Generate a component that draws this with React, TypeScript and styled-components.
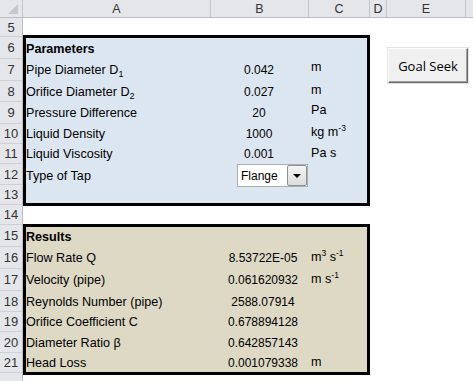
import React from "react";
import styled, { createGlobalStyle } from "styled-components";

const Global = createGlobalStyle`
  html, body {
    margin: 0;
    padding: 0;
    background: #fff;
    overflow: hidden;
    height: 381px;
  }
  body {
    font-family: "Liberation Sans", Arial, sans-serif;
    color: #000;
  }
`;

const Sheet = styled.div`
  display: flex;
  flex-direction: column;
  width: 473px;
  height: 381px;
  overflow: hidden;
`;

const ColHeaderRow = styled.div`
  display: flex;
  height: 18px;
  background: #e4e6ea;
  border-bottom: 1px solid #b9bec5;
  box-sizing: border-box;
  flex-shrink: 0;
`;

const Corner = styled.div`
  width: 23px;
  border-right: 1px solid #c3c7cd;
  box-sizing: border-box;
  display: flex;
`;

const ColHead = styled.div<{ $w: number }>`
  width: ${(p) => p.$w}px;
  flex-shrink: 0;
  border-right: 1px solid #c3c7cd;
  box-sizing: border-box;
  display: flex;
  align-items: center;
  justify-content: center;
  font-size: 12.5px;
  color: #333;
`;

const Body = styled.div`
  display: flex;
  flex: 1;
`;

const RowHeaders = styled.div`
  display: flex;
  flex-direction: column;
  width: 23px;
  flex-shrink: 0;
  background: #e4e6ea;
  border-right: 1px solid #b9bec5;
  box-sizing: border-box;
`;

const RowNum = styled.div<{ $h: number }>`
  height: ${(p) => p.$h}px;
  flex-shrink: 0;
  box-sizing: border-box;
  border-bottom: 1px solid #cdd1d6;
  display: flex;
  align-items: center;
  justify-content: center;
  font-size: 13px;
  color: #333;
`;

const Cells = styled.div`
  display: flex;
  align-items: flex-start;
`;

const Stack = styled.div`
  display: flex;
  flex-direction: column;
`;

const Gap = styled.div<{ $h: number }>`
  height: ${(p) => p.$h}px;
`;

const Panel = styled.div<{ $bg: string }>`
  width: 347px;
  box-sizing: border-box;
  border: 3px solid #000;
  background: ${(p) => p.$bg};
  display: flex;
  flex-direction: column;
`;

const PanelRow = styled.div<{ $h: number }>`
  height: ${(p) => p.$h}px;
  display: grid;
  grid-template-columns: 184px 98px 1fr;
  align-items: center;
`;

const Label = styled.div<{ $bold?: boolean }>`
  font-size: 12.6px;
  font-weight: ${(p) => (p.$bold ? 700 : 400)};
  white-space: nowrap;
`;

const Value = styled.div<{ $shift?: number }>`
  font-size: 12px;
  white-space: nowrap;
  text-align: center;
  padding-left: ${(p) => (p.$shift ?? 0)}px;
`;

const Unit = styled.div<{ $raise?: number }>`
  font-size: 12.6px;
  white-space: nowrap;
  padding-left: 3px;
  padding-bottom: ${(p) => (p.$raise ?? 0) * 2}px;
`;

const Sub = styled.sub`
  font-size: 9px;
  vertical-align: -3px;
  line-height: 0;
`;

const Sup = styled.sup`
  font-size: 8.5px;
  vertical-align: 5px;
  line-height: 0;
`;

const Side = styled.div`
  padding-top: 30px;
  margin-left: 18px;
`;

const GoalButton = styled.button`
  width: 80px;
  height: 35px;
  background: #f0f0f0;
  border: 1px solid;
  border-color: #fff #696969 #696969 #fff;
  box-shadow: inset -1px -1px 0 #a0a0a0;
  outline: 1px solid #e3e3e3;
  font-family: "Open Sans", "Noto Sans", sans-serif;
  font-size: 13px;
  color: #000;
  padding: 0;
`;

const ComboCell = styled.div`
  display: flex;
  padding-left: 27px;
`;

const Combo = styled.div`
  display: flex;
  width: 73px;
  height: 23px;
  box-sizing: border-box;
  background: #fff;
  border: 1px solid #abadb3;
`;

const ComboText = styled.div`
  flex: 1;
  display: flex;
  align-items: center;
  padding-left: 3px;
  font-size: 12px;
`;

const ComboButton = styled.div`
  width: 20px;
  box-sizing: border-box;
  border: 1px solid #8e9196;
  border-radius: 2px;
  background: linear-gradient(#f4f4f4, #dcdcdc);
  display: flex;
  align-items: center;
  justify-content: center;
`;

const Arrow = styled.div`
  width: 0;
  height: 0;
  border-left: 4px solid transparent;
  border-right: 4px solid transparent;
  border-top: 4px solid #000;
`;

const rowHeights: [number, number][] = [
  [5, 19], [6, 22], [7, 22], [8, 21], [9, 22], [10, 20], [11, 20], [12, 21],
  [13, 20], [14, 20], [15, 22], [16, 22], [17, 22], [18, 21], [19, 20],
  [20, 21], [21, 20], [22, 20],
];

const columns: [string, number][] = [
  ["A", 188], ["B", 98], ["C", 61], ["D", 17], ["E", 79], ["", 40],
];

const results: [string, string, React.ReactNode, number][] = [
  ["Flow Rate Q", "8.53722E-05", <>m<Sup>3</Sup> s<Sup>-1</Sup></>, 22],
  ["Velocity (pipe)", "0.061620932", <>m s<Sup>-1</Sup></>, 22],
  ["Reynolds Number (pipe)", "2588.07914", null, 21],
  ["Orifice Coefficient C", "0.678894128", null, 20],
  ["Diameter Ratio β", "0.642857143", null, 21],
  ["Head Loss", "0.001079338", "m", 19],
];

export default function App() {
  return (
    <Sheet>
      <Global />
      <ColHeaderRow>
        <Corner>
          <svg width="22" height="17" viewBox="0 0 22 17">
            <polygon points="18,4 18,14 8,14" fill="#c5c8cd" />
          </svg>
        </Corner>
        {columns.map(([c, w], i) => (
          <ColHead key={i} $w={w}>{c}</ColHead>
        ))}
      </ColHeaderRow>
      <Body>
        <RowHeaders>
          {rowHeights.map(([n, h]) => (
            <RowNum key={n} $h={h}>{n < 22 ? n : ""}</RowNum>
          ))}
        </RowHeaders>
        <Cells>
          <Stack>
            <Gap $h={17} />
            <Panel $bg="#dce6f1">
              <PanelRow $h={21}>
                <Label $bold>Parameters</Label>
              </PanelRow>
              <PanelRow $h={22}>
                <Label>Pipe Diameter D<Sub>1</Sub></Label>
                <Value>0.042</Value>
                <Unit $raise={3}>m</Unit>
              </PanelRow>
              <PanelRow $h={21}>
                <Label>Orifice Diameter D<Sub>2</Sub></Label>
                <Value>0.027</Value>
                <Unit $raise={2}>m</Unit>
              </PanelRow>
              <PanelRow $h={22}>
                <Label>Pressure Difference</Label>
                <Value>20</Value>
                <Unit $raise={3}>Pa</Unit>
              </PanelRow>
              <PanelRow $h={20}>
                <Label>Liquid Density</Label>
                <Value>1000</Value>
                <Unit $raise={2}>kg m<Sup>-3</Sup></Unit>
              </PanelRow>
              <PanelRow $h={20}>
                <Label>Liquid Viscosity</Label>
                <Value>0.001</Value>
                <Unit $raise={1}>Pa s</Unit>
              </PanelRow>
              <PanelRow $h={21}>
                <Label>Type of Tap</Label>
                <ComboCell>
                  <Combo>
                    <ComboText>Flange</ComboText>
                    <ComboButton>
                      <Arrow />
                    </ComboButton>
                  </Combo>
                </ComboCell>
              </PanelRow>
              <PanelRow $h={18} />
            </Panel>
            <Gap $h={18} />
            <Panel $bg="#ddd9c4">
              <PanelRow $h={20}>
                <Label $bold>Results</Label>
              </PanelRow>
              {results.map(([label, value, unit, h], i) => (
                <PanelRow key={i} $h={h}>
                  <Label>{label}</Label>
                  <Value $shift={8}>{value}</Value>
                  <Unit $raise={unit ? 1 : 0}>{unit}</Unit>
                </PanelRow>
              ))}
            </Panel>
          </Stack>
          <Side>
            <GoalButton>Goal Seek</GoalButton>
          </Side>
        </Cells>
      </Body>
    </Sheet>
  );
}
